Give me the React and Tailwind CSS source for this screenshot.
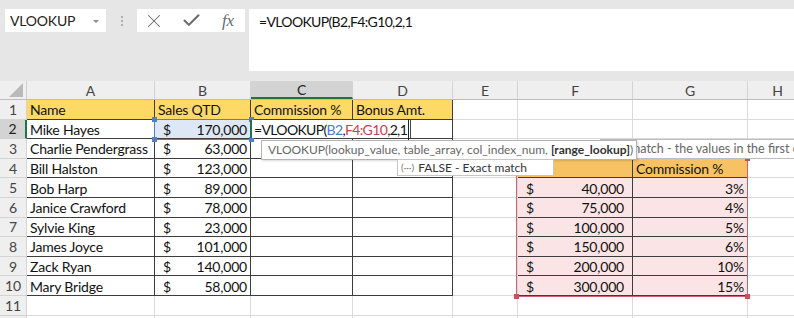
import { X, Check } from "lucide-react";

const cols = [
  { k: "A", w: "w-[128px]" },
  { k: "B", w: "w-[96px]" },
  { k: "C", w: "w-[102px]" },
  { k: "D", w: "w-[100px]" },
  { k: "E", w: "w-[65px]" },
  { k: "F", w: "w-[115px]" },
  { k: "G", w: "w-[115px]" },
  { k: "H", w: "w-[60px]" },
];

const people = [
  ["Mike Hayes", "170,000"],
  ["Charlie Pendergrass", "63,000"],
  ["Bill Halston", "123,000"],
  ["Bob Harp", "89,000"],
  ["Janice Crawford", "78,000"],
  ["Sylvie King", "23,000"],
  ["James Joyce", "101,000"],
  ["Zack Ryan", "140,000"],
  ["Mary Bridge", "58,000"],
];

const rates = [
  ["40,000", "3%"],
  ["75,000", "4%"],
  ["100,000", "5%"],
  ["150,000", "6%"],
  ["200,000", "10%"],
  ["300,000", "15%"],
];

const headers = ["Name", "Sales QTD", "Commission %", "Bonus Amt."];

function Money({ value, pad }) {
  return (
    <div className={`flex w-full justify-between pl-[5px] ${pad}`}>
      <span>$</span>
      <span>{value}</span>
    </div>
  );
}

function Cell({ col, r }) {
  const k = col.k;
  const inLeft = r >= 1 && r <= 10 && "ABCD".includes(k);
  const inRight = r >= 4 && r <= 10 && "FG".includes(k);
  const border = inLeft || inRight ? "border-[#3d3d3d]" : "border-[#dadada]";

  let bg = "bg-white";
  if (r === 1 && inLeft) bg = "bg-[#ffd966]";
  if (r === 2 && k === "B") bg = "bg-[#dde7f5]";
  if (r === 4 && inRight) bg = "bg-[#f7c264]";
  if (r > 4 && inRight) bg = "bg-[#fbe4e5]";

  let content = null;
  if (r === 1 && inLeft) content = <span>{headers["ABCD".indexOf(k)]}</span>;
  if (r >= 2 && r <= 10 && k === "A") content = <span>{people[r - 2][0]}</span>;
  if (r >= 2 && r <= 10 && k === "B") content = <Money value={people[r - 2][1]} pad="pr-0" />;
  if (r === 4 && k === "G") content = <span>Commission %</span>;
  if (r >= 5 && r <= 10 && k === "F") content = <Money value={rates[r - 5][0]} pad="pr-[5px]" />;
  if (r >= 5 && r <= 10 && k === "G")
    content = <span className="ml-auto">{rates[r - 5][1]}</span>;

  return (
    <div
      className={`${col.w} ${bg} ${border} relative flex h-full shrink-0 items-center whitespace-nowrap border-r border-b px-[3px] pt-[1px]`}
    >
      {content}
      {r === 2 && k === "C" && (
        <div className="absolute top-0 bottom-0 left-[-1px] z-10 flex items-center border-l-2 border-r border-l-[#217346] border-r-[#444] bg-white pl-[2px] pr-[1px] pt-[1px] tracking-[-0.65px]">
          <span className="border-r border-[#222] pr-[1px]">
            =VLOOKUP(<span className="text-[#4a7dc4]">B2</span>,
            <span className="text-[#c3424f]">F4:G10</span>,2,1
          </span>
        </div>
      )}
    </div>
  );
}

function Handles({ color }) {
  return (
    <>
      <span className={`absolute -top-[3px] -left-[3px] h-[5px] w-[5px] ${color}`} />
      <span className={`absolute -top-[3px] -right-[3px] h-[5px] w-[5px] ${color}`} />
      <span className={`absolute -bottom-[3px] -left-[3px] h-[5px] w-[5px] ${color}`} />
      <span className={`absolute -right-[3px] -bottom-[3px] h-[5px] w-[5px] ${color}`} />
    </>
  );
}

export default function App() {
  const rows = [1, 2, 3, 4, 5, 6, 7, 8, 9, 10, 11, 12];

  return (
    <div className="relative h-[318px] w-[794px] overflow-hidden bg-[#e6e6e6] font-['Lato',sans-serif] text-[14px] tracking-[-0.2px] text-[#111]">
      {/* Formula bar */}
      <div className="flex h-[81px] items-start pt-[9px] pl-[5px]">
        <div className="flex h-[23px] w-[101px] items-center justify-between bg-white pl-[5px] pr-[7px] text-[14px] text-[#222]">
          <span>VLOOKUP</span>
          <span className="mt-[1px] border-x-[3px] border-t-[3px] border-x-transparent border-t-[#8a8a8a]" />
        </div>
        <div className="flex h-[23px] w-[31px] flex-col items-center justify-center gap-[2px]">
          <span className="h-[2px] w-[2px] bg-[#b0b0b0]" />
          <span className="h-[2px] w-[2px] bg-[#b0b0b0]" />
          <span className="h-[2px] w-[2px] bg-[#b0b0b0]" />
        </div>
        <div className="flex h-[23px] w-[108px] items-center gap-[13px] bg-white pl-[5px] text-[#6b6b6b]">
          <span className="flex w-[24px] justify-center">
            <X size={22} strokeWidth={1.1} />
          </span>
          <span className="flex w-[24px] justify-center">
            <Check size={21} strokeWidth={2.4} />
          </span>
          <span className="flex w-[24px] justify-center font-['Liberation_Serif',serif] text-[17px] italic">
            fx
          </span>
        </div>
        <div className="ml-[4px] h-[62px] flex-1 bg-white pl-[10px] pt-[2px] text-[14px] tracking-[-0.65px] text-[#111]">
          =VLOOKUP(B2,F4:G10,2,1
        </div>
      </div>

      {/* Column headers */}
      <div className="flex h-[19px] border-b border-[#bdbdbd] bg-[#efefef] text-[14px] text-[#444]">
        <div className="relative h-full w-[27px] shrink-0 border-r border-[#cfcfcf]">
          <span className="absolute right-[3px] bottom-[2px] border-b-[14px] border-l-[14px] border-b-[#b9b9b9] border-l-transparent" />
        </div>
        {cols.map((c) => (
          <div
            key={c.k}
            className={`${c.w} flex h-full shrink-0 items-center justify-center border-r border-[#d4d4d4] ${
              c.k === "C" ? "border-b-2 border-b-[#217346] bg-[#d3d3d3] text-[#222]" : ""
            }`}
          >
            {c.k}
          </div>
        ))}
      </div>

      {/* Rows */}
      {rows.map((r) => (
        <div key={r} className="flex h-[19.6px]">
          <div
            className={`flex h-full w-[27px] shrink-0 items-center justify-center border-b border-r text-[14px] ${
              r === 2
                ? "border-r-2 border-b-[#cfcfcf] border-r-[#217346] bg-[#d3d3d3] text-[#222]"
                : "border-[#d4d4d4] bg-[#efefef] text-[#444]"
            }`}
          >
            {r}
          </div>
          {cols.map((c) => (
            <Cell key={c.k} col={c} r={r} />
          ))}
        </div>
      ))}

      {/* B2 reference highlight */}
      <div className="absolute top-[119px] left-[154px] h-[21px] w-[98px] border border-[#4f81c7]">
        <Handles color="bg-[#4f81c7]" />
      </div>

      {/* F4:G10 reference highlight */}
      <div className="absolute top-[158px] left-[516px] h-[139px] w-[232px] border-[1.5px] border-[#d0606c]">
        <Handles color="bg-[#c8505d]" />
      </div>

      {/* Tooltip behind */}
      <div className="absolute top-[139px] left-[600px] flex h-[20px] w-[240px] items-center overflow-hidden border border-[#bdbdbd] bg-white pl-[29px] text-[12.5px] tracking-normal whitespace-nowrap text-[#666]">
        match - the values in the first column
      </div>

      {/* Function tooltip */}
      <div className="absolute top-[140px] left-[261px] flex h-[20px] w-[376px] items-center overflow-hidden border border-[#b3b3b3] bg-white pl-[6px] text-[12px] tracking-normal whitespace-nowrap text-[#666] shadow-[1px_1px_2px_rgba(0,0,0,0.15)]">
        VLOOKUP(lookup_value, table_array, col_index_num,&nbsp;
        <span className="font-bold text-[#333]">[range_lookup]</span>)
      </div>

      {/* Autocomplete dropdown */}
      <div className="absolute top-[159px] left-[397px] flex h-[17px] w-[157px] items-center gap-[4px] border border-[#c6c6c6] bg-white pl-[3px] text-[12px] tracking-normal whitespace-nowrap text-[#333]">
        <span className="text-[10px] text-[#777]">(···)</span>
        <span>FALSE - Exact match</span>
      </div>
    </div>
  );
}
